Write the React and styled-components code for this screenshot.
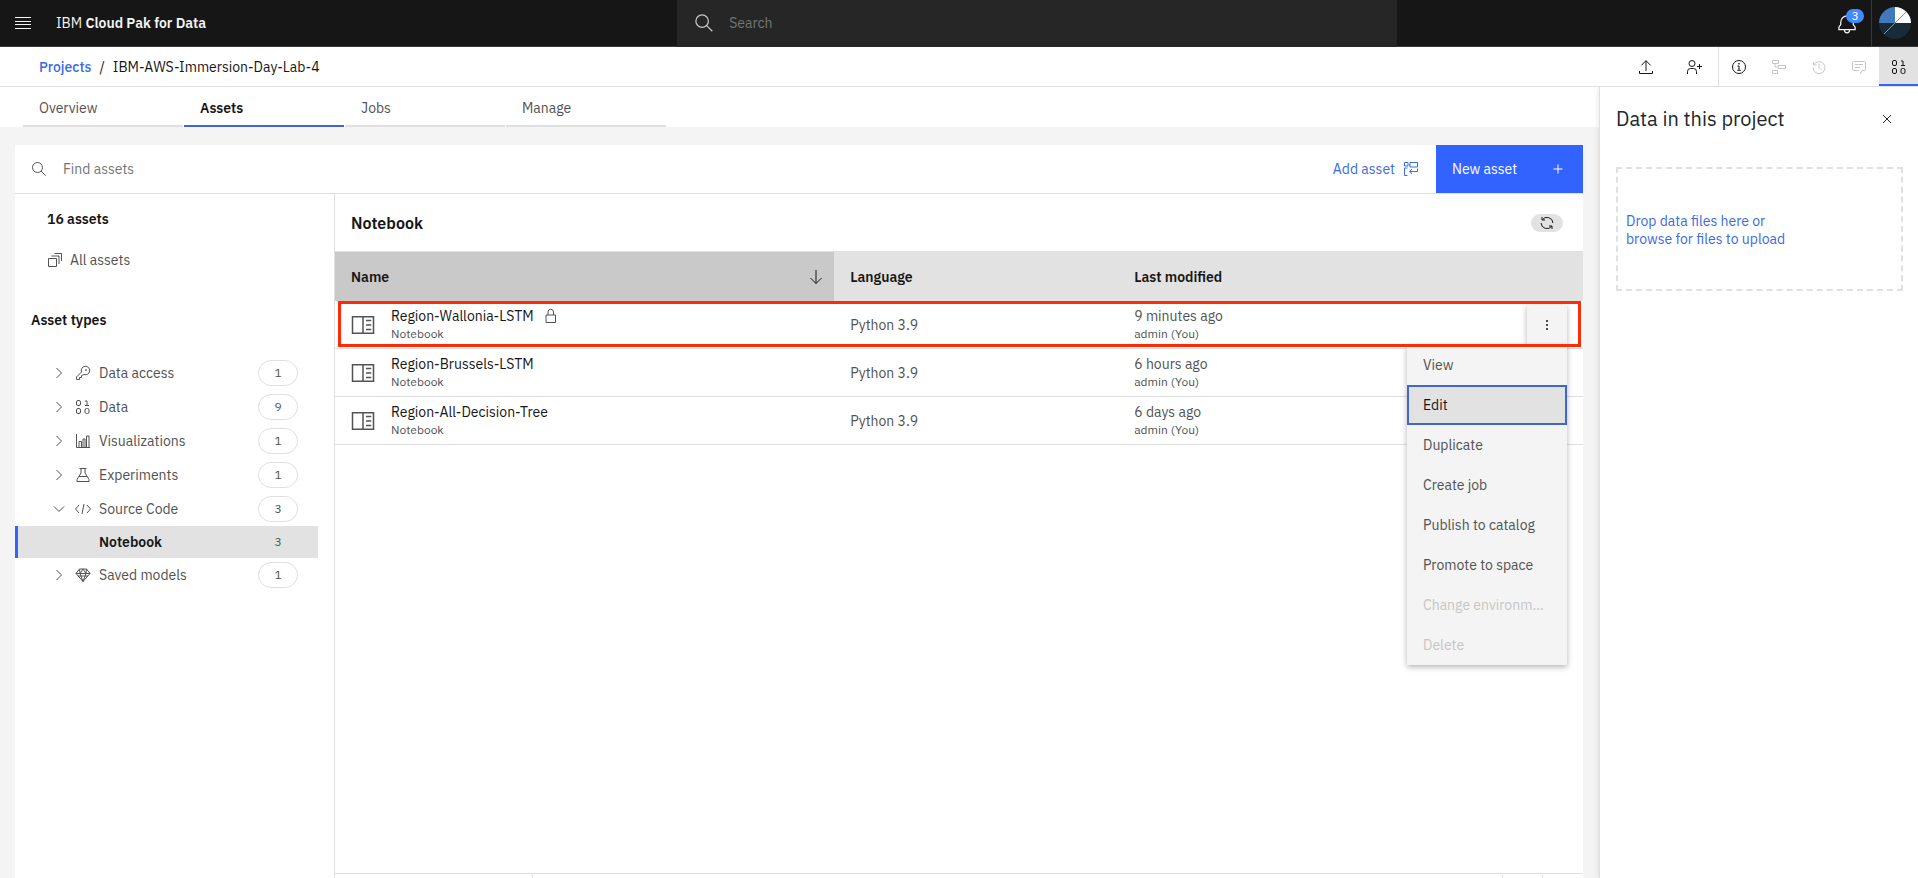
import React, { useState } from "react";
import styled, { createGlobalStyle, ThemeProvider } from "styled-components"


const theme = {
  colors: {
    dark: "#161616",
    text: "#525252",
    placeholder: "#757575",
    disabled: "#c6c6c6",
    border: "#e0e0e0",
    selected: "#e2e2e2",
    layer: "#f4f4f4",
    blue: "#3363ff",
    link: "#3a6ae4",
    outline: "#4168c8",
    highlight: "#ff2b06",
  },
}

const GlobalStyle = createGlobalStyle`
  * {
    box-sizing: border-box;
  }
  body {
    margin: 0;
    background: #ffffff;
    color: ${theme.colors.text};
    font-family: "IBM Plex Sans", Roboto, "Noto Sans", sans-serif;
    font-size: 14px;
    line-height: 18px;
  }
  button, input {
    font: inherit;
    color: inherit;
    border: none;
    background: none;
    padding: 0;
    margin: 0;
  }
  button {
    cursor: pointer;
  }
  a {
    color: inherit;
    text-decoration: none;
  }
  ul {
    list-style: none;
    margin: 0;
    padding: 0;
  }
  h1, h2, h3, p {
    margin: 0;
  }
`


const Svg = styled.svg`
  display: block;
  flex: none;
  fill: none;
  stroke: currentColor;
  stroke-width: 2;
`

// every drawing lives on a 32 x 32 grid
const SHAPES = {
  menu: <path d="M0 5h32M0 13h32M0 19h32M0 27h32" />,
  search: <><circle cx="13" cy="13" r="10" /><path d="M20.2 20.2 29.3 29.3" /></>,
  bell: <path d="M3 25v-4l3-4v-4a10 10 0 0 1 20 0v4l3 4v4ZM12 25v1a4 4 0 0 0 8 0v-1M16 3V1" />,
  upload: <path d="M6.7 12.7 16 3.4l9.3 9.3M16 3.4V24M3 24v5h26v-5" />,
  addUser: <><circle cx="12" cy="9" r="6" /><path d="M3 30v-5a6 6 0 0 1 6-6h6a6 6 0 0 1 6 6v5M27 10v10M22 15h10" /></>,
  info: <><circle cx="16" cy="16" r="13" /><path d="M13 14h3v8M12.500 22.500h7" /><circle cx="16" cy="9.500" r="1" /></>,
  flow: <path d="M3 3h12v6H3ZM14 13h15v6H14ZM3 23h10v6H3ZM8 9v7h6" />,
  history: <path d="M5 6v6h6M5.500 11.500A12 12 0 1 1 4 17M16 9v8l5 5" />,
  chat: <path d="M18 30l4-7h5a2 2 0 0 0 2-2V7a2 2 0 0 0-2-2H5a2 2 0 0 0-2 2v14a2 2 0 0 0 2 2h10M8 11h16M8 17h10" />,
  data: (
    <>
      <rect x="3" y="3" width="8" height="10" rx="3" />
      <path d="M20 4h4v9M20 13h8" />
      <rect x="3" y="19" width="8" height="10" rx="3" />
      <rect x="20" y="19" width="8" height="10" rx="3" />
    </>
  ),
  close: <path d="M8 8l16 16M24 8 8 24" />,
  addAsset: <path d="M3 3h7v7H3ZM14 3h15v9H14ZM12 8h2M9 14H3v6M3 20v9h6M29 15v6H13M18 16l-5 5 5 5" />,
  plus: <path d="M16 7v18M7 16h18" />,
  refresh: <path d="M12 10H6V4M6.500 9.500A12 12 0 0 1 28 16M20 22h6v6M25.500 22.500A12 12 0 0 1 4 16" />,
  arrowDown: <path d="M16 2v27M5 18l11 11 11-11" />,
  layers: <path d="M3 13h16v16H3ZM9 8h15v16M15 3h14v15" />,
  chevronRight: <path d="M11 6l10 10-10 10" />,
  chevronDown: <path d="M6 11l10 10 10-10" />,
  key: <><path d="M13 14 3 24v5h6v-4h4v-4l5-2A8.500 8.500 0 1 0 13 14Z" /><circle cx="22" cy="10" r="1" /></>,
  chart: <path d="M3 2v27h27M8 29V17h5v12M16 29V12h4v17M23 29V6h5v23" />,
  flask: <path d="M9 3h14M12 3v9L4 25v4h24v-4l-8-13V3M8 19h16" />,
  code: <path d="M8 8l-7 8 7 8M24 8l7 8-7 8M18 6l-4 20" />,
  gem: <path d="M9 4h14l7 9-14 16L2 13ZM2 13h28M10 13l6 16 6-16-6-9ZM6 18h20M9 4l1 9M23 4l-1 9" />,
  lock: <path d="M6 14h19v15H6ZM10 14V8a5 5 0 0 1 11 0v6" />,
  notebook: <path d="M2 5h28v22H2ZM16 5v22M20 10h7M20 16h7M20 22h7" />,
  kebab: (
    <g fill="currentColor" stroke="none">
      <circle cx="16" cy="8" r="2" /><circle cx="16" cy="16" r="2" /><circle cx="16" cy="24" r="2" />
    </g>
  ),
}

const Icon = ({ name, size = 16 }) => (
  <Svg width={size} height={size} viewBox="0 0 32 32" aria-hidden="true">
    {SHAPES[name]}
  </Svg>
)


const Page = styled.div`
  height: 100vh;
  display: flex;
  flex-direction: column;
  overflow: hidden;
`

const Header = styled.header`
  flex: none;
  display: grid;
  grid-template-columns: 13fr minmax(200px, 720px) 10fr;
  height: 47px;
  background: ${props => props.theme.colors.dark};
  color: #f4f4f4;
`

const HeaderSide = styled.div`
  display: flex;
  align-items: center;
  justify-content: ${props => props.end ? "flex-end" : "flex-start"};
  border-bottom: 1px solid #393939;
`

const MenuButton = styled.button`
  padding: 0 15px;
  margin-right: 10px;
`

const Brand = styled.a`
  white-space: nowrap;
  b {
    font-weight: 600;
  }
`

const GlobalSearch = styled.label`
  display: flex;
  align-items: center;
  gap: 15px;
  padding: 0 17px 2px;
  background: #262626;
  color: #c6c6c6;
`

const TextInput = styled.input`
  flex: 1;
  min-width: 0;
  outline: none;
  &::placeholder {
    color: ${props => props.theme.colors.placeholder};
    opacity: 1;
  }
`

const BellButton = styled.button`
  position: relative;
  height: 46px;
  padding: 2px 14px 0;
`

const BellBadge = styled.span`
  position: absolute;
  top: 9px;
  right: 7px;
  width: 18px;
  height: 14px;
  border-radius: 7px;
  background: #4589ff;
  color: #ffffff;
  font-size: 12px;
  line-height: 14px;
`

const AvatarButton = styled.button`
  height: 46px;
  padding: 0 7px;
  border-left: 1px solid #393939;
`

const ProjectBar = styled.div`
  flex: none;
  display: flex;
  align-items: center;
  justify-content: space-between;
  height: 40px;
  padding-left: 39px;
  border-bottom: 1px solid ${props => props.theme.colors.border};
`

const Breadcrumb = styled.nav`
  display: flex;
  gap: 8px;
  padding-top: 1px;
  color: ${props => props.theme.colors.dark};
  a {
    color: ${props => props.theme.colors.link};
    font-weight: 500;
  }
`

const ToolGroup = styled.div`
  display: flex;
  height: 39px;
  border-left: ${props => props.divided ? `1px solid ${props.theme.colors.border}` : "none"};
`

const Tools = styled.div`
  display: flex;
`

const Tool = styled.button`
  display: grid;
  place-items: center;
  width: ${props => props.wide ? 48 : 40}px;
  color: ${props => props.theme.colors.dark};
  border-bottom: 2px solid transparent;
  border-top: 2px solid transparent;
  &:disabled {
    color: ${props => props.theme.colors.disabled};
  }
  &[aria-pressed="true"] {
    width: 39px;
    background: ${props => props.theme.colors.selected};
    border-top-color: ${props => props.theme.colors.selected};
    border-bottom-color: ${props => props.theme.colors.blue};
  }
`

const Content = styled.div`
  flex: 1;
  min-height: 0;
  display: flex;
`

const Main = styled.main`
  flex: 1;
  min-width: 0;
  display: flex;
  flex-direction: column;
  background: ${props => props.theme.colors.layer};
`

const Tabs = styled.div`
  flex: none;
  display: flex;
  gap: 1px;
  padding-left: 23px;
  background: #ffffff;
`

const Tab = styled.button`
  width: 160px;
  height: 40px;
  padding: 4px 16px 0;
  text-align: left;
  font-weight: ${props => props.active ? 600 : 400};
  color: ${props => props.active ? props.theme.colors.dark : props.theme.colors.text};
  border-bottom: 2px solid ${props => props.active ? props.theme.colors.outline : props.theme.colors.border};
`

const Card = styled.section`
  flex: 1;
  min-height: 0;
  display: flex;
  flex-direction: column;
  margin: 18px 16px 0 15px;
  background: #ffffff;
`

const Toolbar = styled.div`
  flex: none;
  display: flex;
  height: 49px;
  border-bottom: 1px solid ${props => props.theme.colors.border};
`

const FindAssets = styled.label`
  flex: 1;
  display: flex;
  align-items: center;
  gap: 16px;
  padding-left: 16px;
`

const AddButton = styled.button`
  display: flex;
  align-items: center;
  gap: 8px;
  padding: 0 17px 0 16px;
  color: ${props => props.theme.colors.link};
`

const NewButton = styled.button`
  display: flex;
  align-items: center;
  justify-content: space-between;
  width: 147px;
  padding: 0 17px 0 16px;
  background: ${props => props.theme.colors.blue};
  color: #ffffff;
`

const Columns = styled.div`
  flex: 1;
  min-height: 0;
  display: flex;
`

const Sidebar = styled.aside`
  flex: none;
  width: 320px;
  padding: 16px 16px 0 0;
  border-right: 1px solid ${props => props.theme.colors.border};
`

const SideTitle = styled.h2`
  padding-left: ${props => props.indent ? 32 : 16}px;
  font-size: 14px;
  line-height: 18px;
  font-weight: 600;
  color: ${props => props.theme.colors.dark};
`

const AllAssets = styled.a`
  display: flex;
  align-items: center;
  gap: 7px;
  height: 18px;
  margin: 23px 0 42px;
  padding-left: 32px;
`

const TypeList = styled.ul`
  padding-top: 27px;
`

const TypeRow = styled.button`
  display: flex;
  align-items: center;
  width: 100%;
  height: 34px;
  padding: 0 20px 0 36px;
  text-align: left;
  svg {
    margin-right: 8px;
  }
`

const SubTypeRow = styled(TypeRow)`
  height: 32px;
  padding-left: 81px;
  font-weight: 600;
  color: ${props => props.theme.colors.dark};
  background: ${props => props.theme.colors.selected};
  border-left: 3px solid ${props => props.theme.colors.blue};
`

const Count = styled.span`
  width: 40px;
  height: 26px;
  margin-left: auto;
  border: 1px solid ${props => props.plain ? "transparent" : props.theme.colors.border};
  border-radius: 13px;
  color: ${props => props.theme.colors.text};
  font-size: 12px;
  font-weight: 400;
  line-height: 24px;
  text-align: center;
`

const Listing = styled.div`
  flex: 1;
  min-width: 0;
  display: flex;
  flex-direction: column;
`

const ListingHeader = styled.div`
  display: flex;
  align-items: center;
  justify-content: space-between;
  height: 57px;
  padding: 0 20px 0 16px;
`

const ListingTitle = styled.h1`
  font-size: 16px;
  font-weight: 600;
  color: ${props => props.theme.colors.dark};
`

const RefreshButton = styled.button`
  display: grid;
  place-items: center;
  width: 32px;
  height: 18px;
  border-radius: 9px;
  color: ${props => props.theme.colors.dark};
  background: ${props => props.theme.colors.selected};
`

const Table = styled.table`
  width: 100%;
  table-layout: fixed;
  border-spacing: 0;
`

const HeadCell = styled.th`
  width: ${props => props.width || "auto"};
  height: 50px;
  padding: 0 10px 0 16px;
  text-align: left;
  font-weight: 600;
  color: ${props => props.theme.colors.dark};
  background: ${props => props.sorted ? "#c9c9c9" : props.theme.colors.selected};
  border-top: 1px solid ${props => props.theme.colors.border};
`

const SortButton = styled.button`
  display: flex;
  align-items: center;
  justify-content: space-between;
  width: 100%;
  font-weight: 600;
`

const Row = styled.tr`
  position: relative;
`

// sits over the whole row, its button and the top of its menu
const RowHighlight = styled.span`
  position: absolute;
  inset: 0 2px 2px 3px;
  z-index: 3;
  border: 3px solid ${props => props.theme.colors.highlight};
  pointer-events: none;
`

const Cell = styled.td`
  height: 48px;
  padding: 0 16px;
  border-bottom: 1px solid ${props => props.theme.colors.border};
`

const NameBlock = styled.div`
  display: flex;
  align-items: center;
  gap: 16px;
`

const AssetName = styled.a`
  display: flex;
  align-items: center;
  gap: 9px;
  color: ${props => props.theme.colors.dark};
  svg {
    color: ${props => props.theme.colors.text};
  }
`

const Small = styled.p`
  font-size: 12px;
  line-height: 18px;
`

const Overflow = styled.div`
  position: relative;
  width: 40px;
  margin-left: auto;
`

const KebabButton = styled.button`
  display: grid;
  place-items: center;
  width: 40px;
  height: 40px;
  color: ${props => props.theme.colors.dark};
  background: ${props => props.theme.colors.layer};
  box-shadow: 0 2px 6px rgba(0, 0, 0, 0.3);
`

const Menu = styled.ul`
  position: absolute;
  top: 40px;
  right: 0;
  z-index: 2;
  width: 160px;
  background: ${props => props.theme.colors.layer};
  box-shadow: 0 2px 6px rgba(0, 0, 0, 0.3);
`

const MenuItem = styled.button`
  display: block;
  width: 100%;
  height: 40px;
  padding: 0 16px;
  overflow: hidden;
  text-align: left;
  text-overflow: ellipsis;
  white-space: nowrap;
  outline: ${props => props.active ? `2px solid ${props.theme.colors.outline}` : "none"};
  outline-offset: -2px;
  color: ${props => props.active ? props.theme.colors.dark : props.theme.colors.text};
  background: ${props => props.active ? props.theme.colors.selected : "transparent"};
  &:disabled {
    color: ${props => props.theme.colors.disabled};
  }
`

const Pagination = styled.div`
  display: flex;
  height: 5px;
  margin-top: auto;
  border-top: 1px solid ${props => props.theme.colors.border};
`

const PageSlot = styled.div`
  flex: ${props => props.width ? `0 0 ${props.width}px` : 1};
  border-right: 1px solid ${props => props.theme.colors.border};
  &:last-child {
    border-right: none;
  }
`

const DataPanel = styled.aside`
  flex: none;
  width: 319px;
  padding: 16px 15px 0 16px;
  border-left: 1px solid ${props => props.theme.colors.border};
  background: #ffffff;
  box-shadow: 0 0 6px rgba(0, 0, 0, 0.12);
  clip-path: inset(0 0 0 -6px);
`

const PanelHeader = styled.div`
  display: flex;
  align-items: center;
  justify-content: space-between;
  height: 32px;
  padding-right: 8px;
  color: #21272a;
`

const PanelTitle = styled.h2`
  font-size: 20px;
  line-height: 26px;
  font-weight: 400;
`

const DropZone = styled.button`
  width: 100%;
  height: 124px;
  margin-top: 32px;
  padding: 2px 8px 0;
  border: 2px dashed ${props => props.theme.colors.border};
  color: ${props => props.theme.colors.link};
  text-align: left;
`


const ASSET_TYPES = [
  { name: "Data access", icon: "key", count: 1 },
  { name: "Data", icon: "data", count: 9 },
  { name: "Visualizations", icon: "chart", count: 1 },
  { name: "Experiments", icon: "flask", count: 1 },
  { name: "Source Code", icon: "code", count: 3, children: [{ name: "Notebook", count: 3 }] },
  { name: "Saved models", icon: "gem", count: 1 },
]

const ASSETS = [
  { name: "Region-Wallonia-LSTM", modified: "9 minutes ago", locked: true },
  { name: "Region-Brussels-LSTM", modified: "6 hours ago" },
  { name: "Region-All-Decision-Tree", modified: "6 days ago" },
]

const ACTIONS = [
  { name: "View" },
  { name: "Edit" },
  { name: "Duplicate" },
  { name: "Create job" },
  { name: "Publish to catalog" },
  { name: "Promote to space" },
  { name: "Change environment", disabled: true },
  { name: "Delete", disabled: true },
]

const TABS = ["Overview", "Assets", "Jobs", "Manage"]

const Avatar = () => (
  <Svg width="32" height="32" viewBox="0 0 32 32" aria-hidden="true">
    <path d="M0 16a16 16 0 0 0 32 0Z" fill="#192a38" stroke="none" />
    <path d="M0 16A16 16 0 0 1 16 0v16Z" fill="#4178be" stroke="none" />
    <path d="M16 0a16 16 0 0 1 16 16H16Z" fill="#ffffff" stroke="none" />
    <path d="M5 27 27 5" stroke="#5596e6" strokeWidth="1" />
  </Svg>
)

const AssetRow = ({ asset, open, onToggle }) => {
  return (
    <Row>
      <Cell>
        {open && <RowHighlight />}
        <NameBlock>
          <Icon name="notebook" size={24} />
          <div>
            <AssetName href="#">
              {asset.name}
              {asset.locked && <Icon name="lock" />}
            </AssetName>
            <Small>Notebook</Small>
          </div>
        </NameBlock>
      </Cell>
      <Cell>Python 3.9</Cell>
      <Cell>
        <p>{asset.modified}</p>
        <Small>admin (You)</Small>
      </Cell>
      <Cell>
        {open &&
          <Overflow>
            <KebabButton aria-label="Actions" aria-expanded="true" onClick={onToggle}>
              <Icon name="kebab" />
            </KebabButton>
            <Menu>
              {ACTIONS.map(action =>
                <li key={action.name}>
                  <MenuItem active={action.name === "Edit" ? 1 : undefined} disabled={action.disabled}>
                    {action.name}
                  </MenuItem>
                </li>
              )}
            </Menu>
          </Overflow>
        }
      </Cell>
    </Row>
  )
}

const App = () => {
  const [tab, setTab] = useState("Assets")
  const [opened, setOpened] = useState("Region-Wallonia-LSTM")

  return (
    <ThemeProvider theme={theme}>
      <GlobalStyle />
      <Page>
        <Header>
          <HeaderSide>
            <MenuButton aria-label="Menu"><Icon name="menu" /></MenuButton>
            <Brand href="#">IBM <b>Cloud Pak for Data</b></Brand>
          </HeaderSide>
          <GlobalSearch>
            <Icon name="search" size={20} />
            <TextInput placeholder="Search" aria-label="Search" />
          </GlobalSearch>
          <HeaderSide end={1}>
            <BellButton aria-label="Notifications">
              <Icon name="bell" size={20} />
              <BellBadge>3</BellBadge>
            </BellButton>
            <AvatarButton aria-label="Profile"><Avatar /></AvatarButton>
          </HeaderSide>
        </Header>

        <ProjectBar>
          <Breadcrumb>
            <a href="#">Projects</a>
            <span>/</span>
            <span>IBM-AWS-Immersion-Day-Lab-4</span>
          </Breadcrumb>
          <Tools>
            <ToolGroup>
              <Tool wide={1} aria-label="Export"><Icon name="upload" /></Tool>
              <Tool wide={1} aria-label="Add collaborator"><Icon name="addUser" /></Tool>
            </ToolGroup>
            <ToolGroup divided={1}>
              <Tool aria-label="Information"><Icon name="info" /></Tool>
              <Tool aria-label="Lineage" disabled><Icon name="flow" /></Tool>
              <Tool aria-label="History" disabled><Icon name="history" /></Tool>
              <Tool aria-label="Comments" disabled><Icon name="chat" /></Tool>
              <Tool aria-label="Data" aria-pressed="true"><Icon name="data" /></Tool>
            </ToolGroup>
          </Tools>
        </ProjectBar>

        <Content>
          <Main>
            <Tabs>
              {TABS.map(name =>
                <Tab key={name} active={tab === name ? 1 : undefined} onClick={() => setTab(name)}>
                  {name}
                </Tab>
              )}
            </Tabs>
            <Card>
              <Toolbar>
                <FindAssets>
                  <Icon name="search" />
                  <TextInput placeholder="Find assets" aria-label="Find assets" />
                </FindAssets>
                <AddButton>Add asset <Icon name="addAsset" /></AddButton>
                <NewButton>New asset <Icon name="plus" /></NewButton>
              </Toolbar>
              <Columns>
                <Sidebar>
                  <SideTitle indent={1}>16 assets</SideTitle>
                  <AllAssets href="#"><Icon name="layers" /> All assets</AllAssets>
                  <SideTitle>Asset types</SideTitle>
                  <TypeList>
                    {ASSET_TYPES.map(type =>
                      <li key={type.name}>
                        <TypeRow>
                          <Icon name={type.children ? "chevronDown" : "chevronRight"} />
                          <Icon name={type.icon} />
                          {type.name}
                          <Count>{type.count}</Count>
                        </TypeRow>
                        {type.children && type.children.map(child =>
                          <SubTypeRow key={child.name}>
                            {child.name}
                            <Count plain={1}>{child.count}</Count>
                          </SubTypeRow>
                        )}
                      </li>
                    )}
                  </TypeList>
                </Sidebar>
                <Listing>
                  <ListingHeader>
                    <ListingTitle>Notebook</ListingTitle>
                    <RefreshButton aria-label="Refresh"><Icon name="refresh" /></RefreshButton>
                  </ListingHeader>
                  <Table>
                    <thead>
                      <tr>
                        <HeadCell width="40%" sorted={1}>
                          <SortButton>Name <Icon name="arrowDown" /></SortButton>
                        </HeadCell>
                        <HeadCell width="284px">Language</HeadCell>
                        <HeadCell>Last modified</HeadCell>
                        <HeadCell width="72px" aria-label="Actions" />
                      </tr>
                    </thead>
                    <tbody>
                      {ASSETS.map(asset =>
                        <AssetRow
                          key={asset.name}
                          asset={asset}
                          open={opened === asset.name}
                          onToggle={() => setOpened(undefined)}
                        />
                      )}
                    </tbody>
                  </Table>
                  <Pagination>
                    <PageSlot width={198} />
                    <PageSlot />
                    <PageSlot width={40} />
                    <PageSlot width={40} />
                  </Pagination>
                </Listing>
              </Columns>
            </Card>
          </Main>

          <DataPanel>
            <PanelHeader>
              <PanelTitle>Data in this project</PanelTitle>
              <button aria-label="Close"><Icon name="close" /></button>
            </PanelHeader>
            <DropZone>
              Drop data files here or<br />browse for files to upload
            </DropZone>
          </DataPanel>
        </Content>
      </Page>
    </ThemeProvider>
  )
}

export default App;
